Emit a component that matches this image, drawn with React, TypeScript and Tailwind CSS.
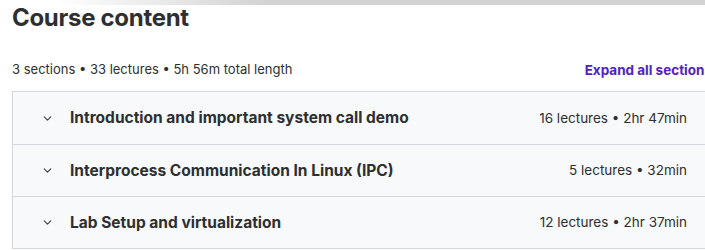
import { ChevronDown } from "lucide-react";

const sections = [
  { title: "Introduction and important system call demo", meta: "16 lectures • 2hr 47min" },
  { title: "Interprocess Communication In Linux (IPC)", meta: "5 lectures • 32min" },
  { title: "Lab Setup and virtualization", meta: "12 lectures • 2hr 37min" },
];

export default function App() {
  return (
    <div className="w-[705px] h-[250px] overflow-hidden bg-white text-[#2d2f31] font-['Inter',sans-serif]">
      <div className="h-[5px] bg-gradient-to-r from-white from-[8%] to-[#d3d3d3] to-[38%]" />
      <div className="w-[700px] ml-3">
        <h2 className="text-[24px] leading-[26px] font-bold tracking-[-0.3px]">Course content</h2>
        <div className="flex items-center justify-between mt-[25px] h-[28px]">
          <span className="text-[13px]">3 sections • 33 lectures • 5h 56m total length</span>
          <button className="text-[13.5px] font-bold text-[#5022c3]">Expand all sections</button>
        </div>
        <div className="mt-[7px] border border-[#d1d7dc]">
          {sections.map((s, i) => (
            <div
              key={i}
              className={`flex items-center h-[52px] bg-[#f7f9fa] pl-[28px] pr-[24px] ${i > 0 ? "border-t border-[#d1d7dc]" : ""}`}
            >
              <ChevronDown className="w-[13px] h-[13px] text-[#3e4143]" strokeWidth={2} />
              <span className="ml-[16px] text-[15.5px] font-bold">{s.title}</span>
              <span className="ml-auto text-[13.5px]">{s.meta}</span>
            </div>
          ))}
        </div>
      </div>
    </div>
  );
}
